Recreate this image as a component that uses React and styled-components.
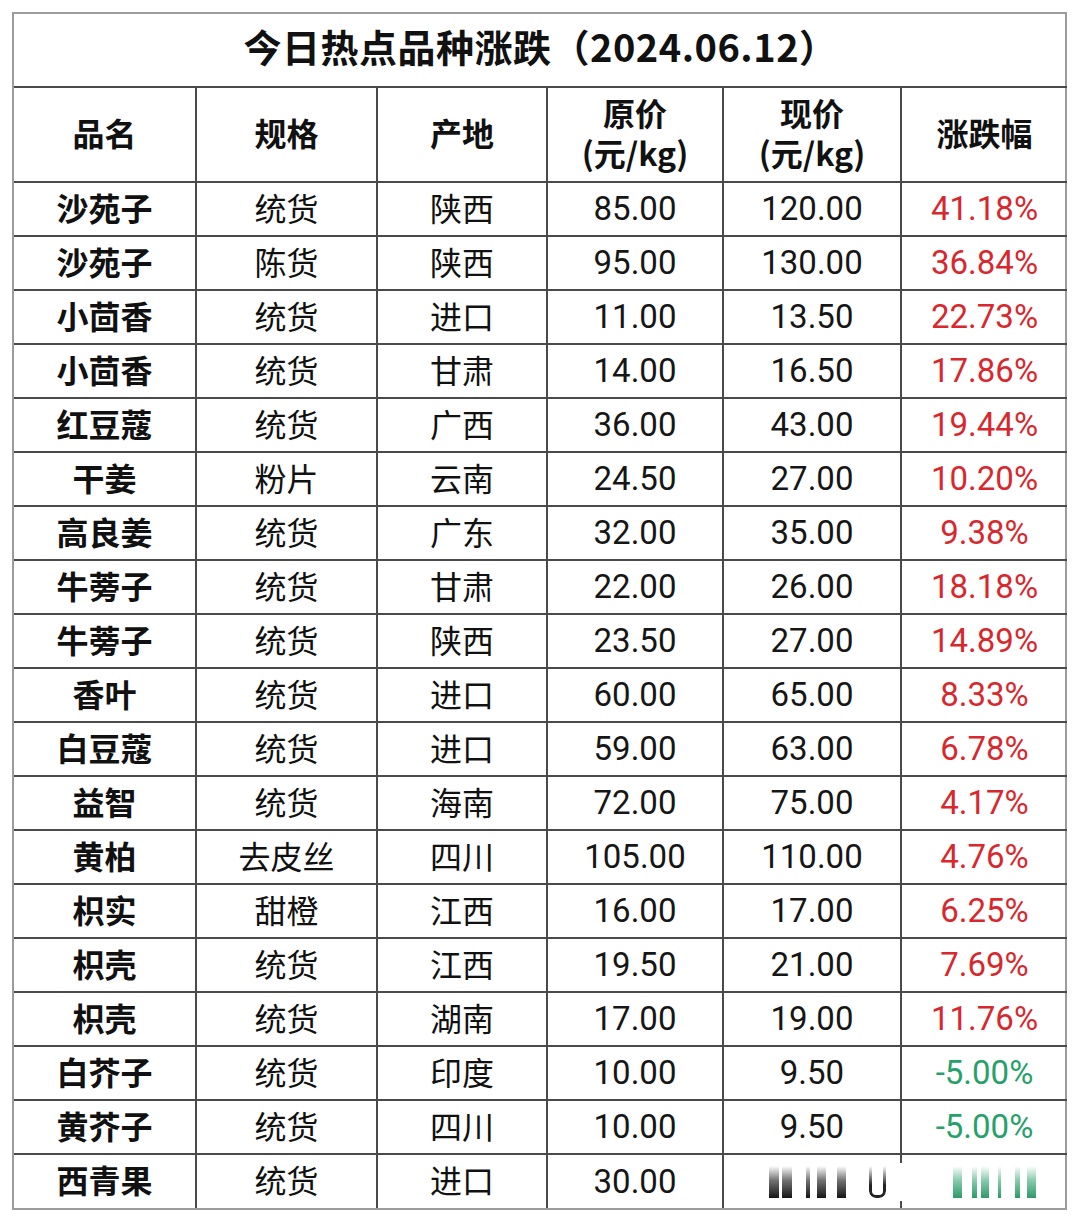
import React from "react";
import styled, { createGlobalStyle } from "styled-components";

const GlobalStyle = createGlobalStyle`
  html, body {
    margin: 0;
    padding: 0;
    background: #ffffff;
  }
  body {
    font-family: "Roboto", "Noto Sans CJK SC", sans-serif;
    color: #111111;
  }
`;

const rows = [
  ["沙苑子", "统货", "陕西", "85.00", "120.00", "41.18%"],
  ["沙苑子", "陈货", "陕西", "95.00", "130.00", "36.84%"],
  ["小茴香", "统货", "进口", "11.00", "13.50", "22.73%"],
  ["小茴香", "统货", "甘肃", "14.00", "16.50", "17.86%"],
  ["红豆蔻", "统货", "广西", "36.00", "43.00", "19.44%"],
  ["干姜", "粉片", "云南", "24.50", "27.00", "10.20%"],
  ["高良姜", "统货", "广东", "32.00", "35.00", "9.38%"],
  ["牛蒡子", "统货", "甘肃", "22.00", "26.00", "18.18%"],
  ["牛蒡子", "统货", "陕西", "23.50", "27.00", "14.89%"],
  ["香叶", "统货", "进口", "60.00", "65.00", "8.33%"],
  ["白豆蔻", "统货", "进口", "59.00", "63.00", "6.78%"],
  ["益智", "统货", "海南", "72.00", "75.00", "4.17%"],
  ["黄柏", "去皮丝", "四川", "105.00", "110.00", "4.76%"],
  ["枳实", "甜橙", "江西", "16.00", "17.00", "6.25%"],
  ["枳壳", "统货", "江西", "19.50", "21.00", "7.69%"],
  ["枳壳", "统货", "湖南", "17.00", "19.00", "11.76%"],
  ["白芥子", "统货", "印度", "10.00", "9.50", "-5.00%"],
  ["黄芥子", "统货", "四川", "10.00", "9.50", "-5.00%"],
];

const colWidths = [182, 181, 170, 176, 178, 166];

// blurred marks of the watermark in the last row
const marks = [
  { gap: 8, w: 10, tone: "dark" },
  { gap: 3, w: 10, tone: "dark" },
  { gap: 14, w: 4, tone: "dark" },
  { gap: 7, w: 9, tone: "dark" },
  { gap: 11, w: 9, tone: "dark" },
  { gap: 23, w: 17, tone: "cup" },
  { gap: 67, w: 9, tone: "green" },
  { gap: 10, w: 5, tone: "green" },
  { gap: 4, w: 8, tone: "green" },
  { gap: 9, w: 3, tone: "green" },
  { gap: 14, w: 5, tone: "green" },
  { gap: 7, w: 9, tone: "green" },
];

export default function App() {
  return (
    <>
      <GlobalStyle />
      <Page>
        <Frame>
          <Table>
            <colgroup>
              {colWidths.map((w, i) => (
                <Col key={i} $w={w} />
              ))}
            </colgroup>
            <tbody>
              <TitleRow>
                <TitleCell colSpan={6}>今日热点品种涨跌（2024.06.12）</TitleCell>
              </TitleRow>
              <HeadRow>
                <HeadCell>品名</HeadCell>
                <HeadCell>规格</HeadCell>
                <HeadCell>产地</HeadCell>
                <HeadCell>
                  <HeadLine>原价</HeadLine>
                  <HeadLine>(元/kg)</HeadLine>
                </HeadCell>
                <HeadCell>
                  <HeadLine>现价</HeadLine>
                  <HeadLine>(元/kg)</HeadLine>
                </HeadCell>
                <HeadCell>涨跌幅</HeadCell>
              </HeadRow>
              {rows.map((r, i) => (
                <DataRow key={i}>
                  <NameCell>{r[0]}</NameCell>
                  <TextCell>{r[1]}</TextCell>
                  <TextCell>{r[2]}</TextCell>
                  <NumCell>{r[3]}</NumCell>
                  <NumCell>{r[4]}</NumCell>
                  <NumCell $tone={r[5].startsWith("-") ? "down" : "up"}>{r[5]}</NumCell>
                </DataRow>
              ))}
              <DataRow>
                <NameCell>西青果</NameCell>
                <TextCell>统货</TextCell>
                <TextCell>进口</TextCell>
                <NumCell>30.00</NumCell>
                <MarkedCell>
                  <Watermark>
                    {marks.map((m, i) => (
                      <Mark key={i} $gap={m.gap} $w={m.w} $tone={m.tone} />
                    ))}
                  </Watermark>
                </MarkedCell>
                <NumCell />
              </DataRow>
            </tbody>
          </Table>
        </Frame>
      </Page>
    </>
  );
}

const Page = styled.div`
  width: 1080px;
  height: 1218px;
  padding: 12px 0 0 12px;
  box-sizing: border-box;
`;

const Frame = styled.div`
  width: 1055px;
  border: 2px solid #9c9c9c;
  box-sizing: border-box;
`;

const Table = styled.table`
  width: 100%;
  border-collapse: collapse;
  border-style: hidden;
  table-layout: fixed;
`;

const Col = styled.col`
  width: ${(p) => p.$w}px;
`;

const Cell = styled.td`
  border: 2px solid #4a4a4a;
  padding: 0;
  text-align: center;
  vertical-align: middle;
  white-space: nowrap;
`;

const TitleRow = styled.tr`
  height: 73px;
`;

const TitleCell = styled(Cell)`
  font-family: "Noto Sans CJK SC", sans-serif;
  font-weight: 700;
  font-size: 38px;
  line-height: 44px;
  letter-spacing: 0.5px;
  padding-bottom: 8px;
  color: #111;
`;

const HeadRow = styled.tr`
  height: 95px;
`;

const HeadCell = styled(Cell)`
  font-family: "Noto Sans CJK SC", sans-serif;
  font-weight: 700;
  font-size: 32px;
  line-height: 40px;
  padding-bottom: 6px;
  color: #111;
`;

const HeadLine = styled.div`
  line-height: 40px;
`;

const DataRow = styled.tr`
  height: 54px;
`;

const NameCell = styled(Cell)`
  font-family: "Noto Sans CJK SC", sans-serif;
  font-weight: 700;
  font-size: 32px;
  line-height: 40px;
  padding-bottom: 5px;
`;

const TextCell = styled(Cell)`
  font-family: "Noto Sans CJK SC", sans-serif;
  font-weight: 400;
  font-size: 32px;
  line-height: 40px;
  padding-bottom: 5px;
`;

const NumCell = styled(Cell)`
  font-family: "Roboto", "Noto Sans CJK SC", sans-serif;
  font-size: 33px;
  line-height: 40px;
  color: ${(p) => (p.$tone === "up" ? "#d8282e" : p.$tone === "down" ? "#27a06a" : "#161616")};
`;

const MarkedCell = styled(Cell)`
  position: relative;
`;

const Watermark = styled.div`
  position: absolute;
  left: 37px;
  top: 8px;
  width: 292px;
  height: 38px;
  display: flex;
  align-items: center;
  background: #ffffff;
  z-index: 1;
`;

const Mark = styled.span`
  flex: none;
  margin-left: ${(p) => p.$gap}px;
  width: ${(p) => p.$w}px;
  height: 32px;
  box-sizing: border-box;
  background: ${(p) =>
    p.$tone === "green"
      ? "linear-gradient(to bottom, rgba(39,160,106,0) 0%, rgba(39,160,106,0.55) 45%, #2e9a66 100%)"
      : p.$tone === "dark"
      ? "linear-gradient(to bottom, rgba(20,20,20,0) 0%, rgba(20,20,20,0.6) 45%, #151515 100%)"
      : "transparent"};
  border: ${(p) => (p.$tone === "cup" ? "3px solid #222" : "none")};
  border-top: none;
  border-radius: ${(p) => (p.$tone === "cup" ? "0 0 7px 7px" : "0")};
  -webkit-mask-image: ${(p) =>
    p.$tone === "cup" ? "linear-gradient(to bottom, transparent 0%, black 60%)" : "none"};
  mask-image: ${(p) =>
    p.$tone === "cup" ? "linear-gradient(to bottom, transparent 0%, black 60%)" : "none"};
`;
